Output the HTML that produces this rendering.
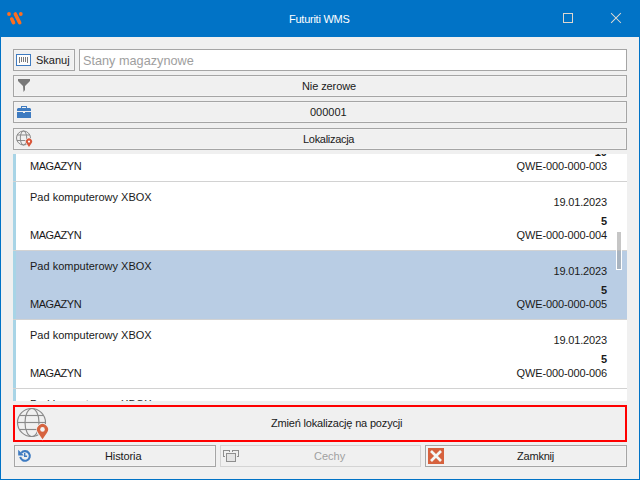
<!DOCTYPE html>
<html><head><meta charset="utf-8">
<style>
*{margin:0;padding:0;box-sizing:border-box}
html,body{width:640px;height:480px;overflow:hidden;background:#f0f0f0;font-family:"Liberation Sans",sans-serif;font-size:11px;color:#1a1a1a}
.a{position:absolute}
.win{position:absolute;left:0;top:0;width:640px;height:480px;border:1px solid #0173c6;border-top:0;background:#f0f0f0}
.title{position:absolute;left:0;top:0;width:640px;height:37px;background:#0173c6}
.btn{position:absolute;border:1px solid #a5a5a5;background:#f0f0f0;box-shadow:inset 0 0 0 1px #f4f4f4}
.t{position:absolute;white-space:nowrap;line-height:13px;height:13px}
.r{text-align:right}
.sep{position:absolute;left:13px;width:614px;height:1px;background:#d2d2d2}
</style></head><body>
<div class="win"></div>
<div class="title">
  <svg class="a" style="left:0;top:0" width="40" height="37" viewBox="0 0 40 37">
    <g fill="#ff6e1f" stroke="#ff6e1f">
      <circle cx="9" cy="14" r="1.9" stroke="none"/>
      <circle cx="20.8" cy="14" r="1.9" stroke="none"/>
      <line x1="15.3" y1="14" x2="19.7" y2="22.7" stroke-width="3.6" stroke-linecap="round"/>
      <line x1="11.8" y1="19" x2="13.5" y2="22.7" stroke-width="3.6" stroke-linecap="round"/>
    </g>
  </svg>
  <div class="t" style="left:289px;top:13px;color:#fff;font-size:11px;letter-spacing:-0.25px">Futuriti WMS</div>
  <svg class="a" style="left:560px;top:10px" width="70" height="20" viewBox="560 10 70 20">
    <rect x="563.5" y="13.5" width="9" height="9" fill="none" stroke="#ddd6cf" stroke-width="1"/>
    <path d="M611.5 13.5 L620.5 22.5 M620.5 13.5 L611.5 22.5" stroke="#e2dad2" stroke-width="1.05" stroke-linecap="square" fill="none"/>
  </svg>
</div>

<!-- Skanuj -->
<div class="btn" style="left:13px;top:49px;width:62px;height:22px"></div>
<svg class="a" style="left:14px;top:50px" width="20" height="20" viewBox="14 50 20 20">
  <rect x="16.5" y="54.5" width="14" height="11" fill="#fdfdfd" stroke="#3e7bc1" stroke-width="1"/>
  <g fill="#7a7a7a"><rect x="19" y="57" width="1" height="6"/><rect x="21" y="57" width="1" height="5"/><rect x="23" y="57" width="1" height="5"/><rect x="25" y="57" width="1" height="5"/><rect x="27" y="57" width="1" height="6"/></g>
</svg>
<div class="t" style="left:36px;top:54px">Skanuj</div>

<div class="a" style="left:79px;top:49px;width:548px;height:22px;border:1px solid #a5a5a5;background:#fff"></div>
<div class="t" style="left:83px;top:54px;font-size:12.7px;color:#9e9e9e;line-height:14px;height:14px">Stany magazynowe</div>

<!-- filter -->
<div class="btn" style="left:13px;top:75px;width:614px;height:22px"></div>
<svg class="a" style="left:14px;top:76px" width="20" height="20" viewBox="14 76 20 20">
  <path d="M18 79 H30 V81 L25 86 V90 L23.5 92 L23 86 L18 81 Z" fill="#787878"/>
</svg>
<div class="t" style="left:302px;top:80px;letter-spacing:-0.1px">Nie zerowe</div>

<!-- 000001 -->
<div class="btn" style="left:13px;top:101px;width:614px;height:22px"></div>
<svg class="a" style="left:14px;top:102px" width="20" height="20" viewBox="14 102 20 20">
  <g fill="#3e7bc1">
    <path d="M17 111 V109 L18 108 H21 V106 H27 V108 H30 L31 109 V111 Z M22 107 V108 H26 V107 Z" fill-rule="evenodd"/>
    <path d="M17 112 H23 V113 H25 V112 H31 V118 H17 Z"/>
  </g>
</svg>
<div class="t" style="left:310px;top:106px">000001</div>

<!-- Lokalizacja -->
<div class="btn" style="left:13px;top:128px;width:614px;height:22px"></div>
<svg class="a" style="left:14px;top:129px" width="20" height="20" viewBox="14 129 20 20">
  <g fill="none" stroke="#858585" stroke-width="0.95">
    <circle cx="23.5" cy="138" r="7"/>
    <ellipse cx="23.5" cy="138" rx="3.2" ry="7"/>
    <line x1="17" y1="135" x2="30" y2="135"/>
    <line x1="17" y1="140.5" x2="30" y2="140.5"/>
  </g>
  <path d="M29 146.9 L26.49 143.31 A3.1 3.1 0 1 1 31.51 143.31 Z" fill="#d9573a" stroke="#f0f0f0" stroke-width="1.2" paint-order="stroke"/>
  <circle cx="29" cy="141.6" r="1.1" fill="#fff"/>
</svg>
<div class="t" style="left:303px;top:133px;letter-spacing:-0.3px">Lokalizacja</div>

<!-- list -->
<div class="a" style="left:13px;top:154px;width:614px;height:247px;background:#fff;overflow:hidden">
  <div class="a" style="left:0;top:0;width:3px;height:247px;background:#a8d4e6"></div>
  <!--ROWS-->
<div class="a" style="left:3px;top:-41px;width:611px;height:68px;"></div>
<div class="sep" style="left:0;width:614px;top:27px"></div>
<div class="t" style="left:17px;top:-32px;">Pad komputerowy XBOX</div>
<div class="t r" style="right:20px;top:-27px;letter-spacing:-0.15px">19.01.2023</div>
<div class="t r" style="right:20px;top:-8px;font-weight:bold">10</div>
<div class="t r" style="right:20px;top:6px;letter-spacing:-0.12px">QWE-000-000-003</div>
<div class="t" style="left:17px;top:6px;letter-spacing:-0.45px">MAGAZYN</div>
<div class="a" style="left:3px;top:28px;width:611px;height:68px;"></div>
<div class="sep" style="left:0;width:614px;top:96px"></div>
<div class="t" style="left:17px;top:37px;">Pad komputerowy XBOX</div>
<div class="t r" style="right:20px;top:42px;letter-spacing:-0.15px">19.01.2023</div>
<div class="t r" style="right:20px;top:61px;font-weight:bold">5</div>
<div class="t r" style="right:20px;top:75px;letter-spacing:-0.12px">QWE-000-000-004</div>
<div class="t" style="left:17px;top:75px;letter-spacing:-0.45px">MAGAZYN</div>
<div class="a" style="left:3px;top:97px;width:611px;height:68px;background:#b9cde4;"></div>
<div class="sep" style="left:0;width:614px;top:165px"></div>
<div class="t" style="left:17px;top:106px;">Pad komputerowy XBOX</div>
<div class="t r" style="right:20px;top:111px;letter-spacing:-0.15px">19.01.2023</div>
<div class="t r" style="right:20px;top:130px;font-weight:bold">5</div>
<div class="t r" style="right:20px;top:144px;letter-spacing:-0.12px">QWE-000-000-005</div>
<div class="t" style="left:17px;top:144px;letter-spacing:-0.45px">MAGAZYN</div>
<div class="a" style="left:3px;top:166px;width:611px;height:68px;"></div>
<div class="sep" style="left:0;width:614px;top:234px"></div>
<div class="t" style="left:17px;top:175px;">Pad komputerowy XBOX</div>
<div class="t r" style="right:20px;top:180px;letter-spacing:-0.15px">19.01.2023</div>
<div class="t r" style="right:20px;top:199px;font-weight:bold">5</div>
<div class="t r" style="right:20px;top:213px;letter-spacing:-0.12px">QWE-000-000-006</div>
<div class="t" style="left:17px;top:213px;letter-spacing:-0.45px">MAGAZYN</div>
<div class="a" style="left:3px;top:235px;width:611px;height:68px;"></div>
<div class="sep" style="left:0;width:614px;top:303px"></div>
<div class="t" style="left:17px;top:244px;">Pad komputerowy XBOX</div>
<div class="t r" style="right:20px;top:249px;letter-spacing:-0.15px">19.01.2023</div>
<div class="t r" style="right:20px;top:268px;font-weight:bold">5</div>
<div class="t r" style="right:20px;top:282px;letter-spacing:-0.12px">QWE-000-000-007</div>
<div class="t" style="left:17px;top:282px;letter-spacing:-0.45px">MAGAZYN</div>
<div class="a" style="left:603px;top:77px;width:6px;height:39px;background:#fff"></div>
<div class="a" style="left:604px;top:78px;width:4px;height:18px;background:#c6c6c6"></div>
<div class="a" style="left:604px;top:96px;width:4px;height:1px;background:#b8b8b8"></div>
<div class="a" style="left:604px;top:97px;width:4px;height:18px;background:#a9b4c0"></div>
<!--/ROWS-->
</div>

<!-- red button -->
<div class="a" style="left:13px;top:405px;width:614px;height:37px;border:2px solid #ff0000;background:#f0f0f0"></div>
<svg class="a" style="left:14px;top:406px" width="40" height="36" viewBox="14 406 40 36">
  <g fill="none" stroke="#8a8a8a" stroke-width="1.15">
    <circle cx="31.5" cy="422.5" r="14"/>
    <ellipse cx="32" cy="422.5" rx="7" ry="14"/>
    <line x1="17.5" y1="422.5" x2="45.5" y2="422.5"/>
    <line x1="19.5" y1="415.5" x2="43.5" y2="415.5"/>
    <line x1="19.5" y1="429.5" x2="43.5" y2="429.5"/>
  </g>
  <path d="M42.5 439.2 L38.02 432.68 A5.5 5.5 0 1 1 46.98 432.68 Z" fill="#d6633f" stroke="#f0f0f0" stroke-width="1.6" paint-order="stroke"/>
  <circle cx="42.5" cy="429.4" r="2.3" fill="#f4f4f4"/>
</svg>
<div class="t" style="left:271px;top:417px;letter-spacing:-0.18px">Zmień lokalizację na pozycji</div>

<!-- bottom buttons -->
<div class="btn" style="left:14px;top:445px;width:202px;height:22px"></div>
<svg class="a" style="left:14px;top:445px" width="22" height="22" viewBox="14 445 22 22">
  <path d="M20.27 456.83 A4.8 4.8 0 1 0 21.3 452.9" fill="none" stroke="#3e7bc1" stroke-width="2.1"/>
  <path d="M18.2 449.7 L18.2 455.6 L23.9 455.6 Z" fill="#3e7bc1"/>
  <path d="M24 453 H25.4 V455.6 H27.1 V457 H24 Z" fill="#3e7bc1"/>
</svg>
<div class="t" style="left:105px;top:450px;letter-spacing:-0.1px">Historia</div>

<div class="a" style="left:220px;top:445px;width:201px;height:22px;border:1px solid #d4d4d4;background:#f0f0f0"></div>
<svg class="a" style="left:220px;top:445px" width="22" height="22" viewBox="220 445 22 22" shape-rendering="crispEdges">
  <g fill="#8e8e8e"><rect x="223" y="450" width="7" height="1"/><rect x="229" y="450" width="1" height="2"/><rect x="223" y="450" width="1" height="7"/><rect x="223" y="456" width="2" height="1"/>
  <rect x="232" y="450" width="7" height="1"/><rect x="232" y="450" width="1" height="2"/><rect x="238" y="450" width="1" height="7"/><rect x="237" y="456" width="2" height="1"/></g>
  <rect x="226.5" y="453.5" width="9" height="8" fill="#e4e4e4" stroke="#8e8e8e" stroke-width="1"/>
</svg>
<div class="t" style="left:314px;top:450px;color:#a0a0a0">Cechy</div>

<div class="btn" style="left:425px;top:445px;width:202px;height:22px"></div>
<svg class="a" style="left:425px;top:445px" width="22" height="22" viewBox="425 445 22 22">
  <rect x="428" y="448" width="16" height="16" fill="#d6623e"/>
  <path d="M431 451 L441 461 M441 451 L431 461" stroke="#f3f6f6" stroke-width="2.7"/>
</svg>
<div class="t" style="left:517px;top:450px;letter-spacing:-0.2px">Zamknij</div>

</body></html>
